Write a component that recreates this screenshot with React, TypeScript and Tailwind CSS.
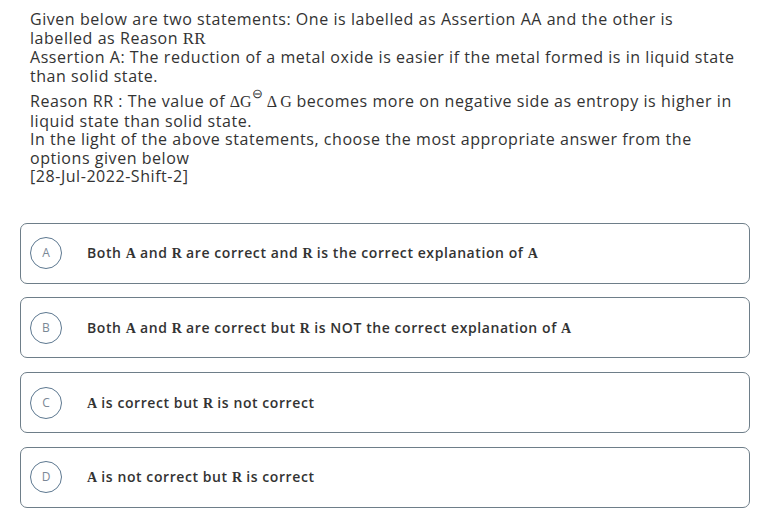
import React from "react";

const M = ({ children }: { children: React.ReactNode }) => (
  <span className="font-['Liberation_Serif',serif] font-bold tracking-normal">{children}</span>
);

const options: { key: string; content: React.ReactNode }[] = [
  {
    key: "A",
    content: (
      <>
        Both <M>A</M> and <M>R</M> are correct and <M>R</M> is the correct explanation of <M>A</M>
      </>
    ),
  },
  {
    key: "B",
    content: (
      <>
        Both <M>A</M> and <M>R</M> are correct but <M>R</M> is NOT the correct explanation of <M>A</M>
      </>
    ),
  },
  {
    key: "C",
    content: (
      <>
        <M>A</M> is correct but <M>R</M> is not correct
      </>
    ),
  },
  {
    key: "D",
    content: (
      <>
        <M>A</M> is not correct but <M>R</M> is correct
      </>
    ),
  },
];

export default function App() {
  return (
    <div className="w-[769px] h-[524px] bg-white px-[20px] pt-[10px] font-['Open_Sans',sans-serif] text-[#333]">
      <div className="pl-[10px] text-[16px] leading-[18.5px] tracking-[0.55px] whitespace-nowrap">
        <div>
          <div>Given below are two statements: One is labelled as Assertion AA and the other is</div>
          <div>
            labelled as Reason <span className="font-['Liberation_Serif',serif] text-[17px] tracking-normal">RR</span>
          </div>
          <div>Assertion A: The reduction of a metal oxide is easier if the metal formed is in liquid state</div>
          <div>than solid state.</div>
        </div>
        <div className="mt-[7px]">
          <div>
            Reason RR : The value of{" "}
            <span className="font-['Liberation_Serif',serif] text-[16px] tracking-normal">
              ΔG<span className="inline-block align-top text-[13px] leading-[10px] -mt-[3px]">⊖</span> Δ&#8201;G
            </span>{" "}
            becomes more on negative side as entropy is higher in
          </div>
          <div>liquid state than solid state.</div>
          <div>In the light of the above statements, choose the most appropriate answer from the</div>
          <div>options given below</div>
          <div>[28-Jul-2022-Shift-2]</div>
        </div>
      </div>
      <div className="mt-[37px] flex flex-col gap-[13.8px]">
        {options.map((o) => (
          <div
            key={o.key}
            className="w-[730px] h-[61px] border border-[#6e7e89] rounded-[7px] flex items-center pl-[9px]"
          >
            <div className="w-[32px] h-[32px] rounded-full border border-[#5d7890] flex items-center justify-center text-[12px] text-[#7b8896] shrink-0">
              {o.key}
            </div>
            <div className="ml-[25px] text-[14px] font-semibold tracking-[0.58px] text-[#333] whitespace-nowrap">
              {o.content}
            </div>
          </div>
        ))}
      </div>
    </div>
  );
}
